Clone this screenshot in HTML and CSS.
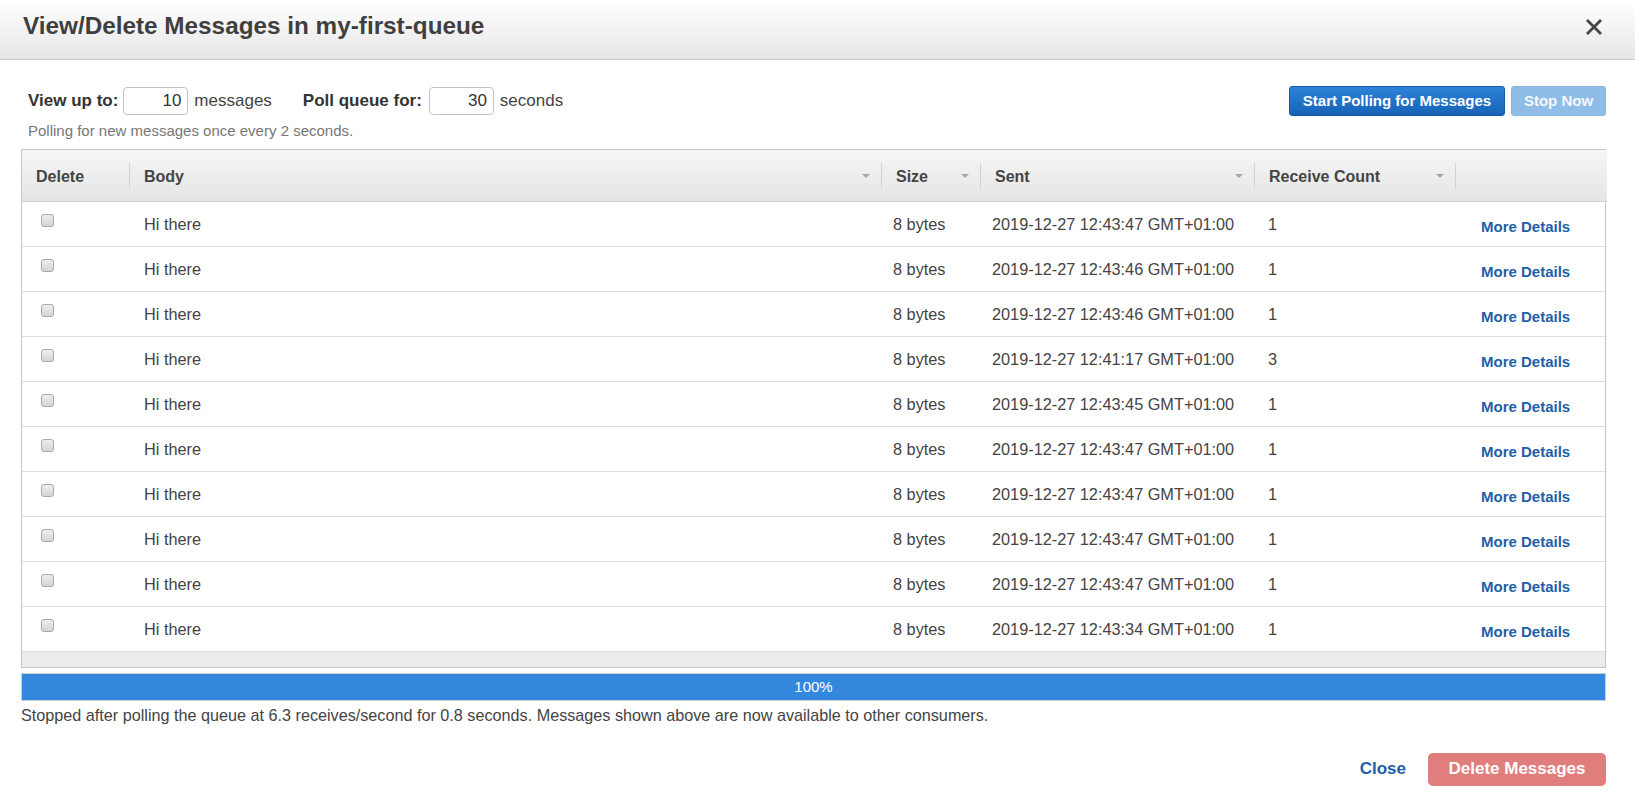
FILE: index.html
```html
<!DOCTYPE html>
<html>
<head>
<meta charset="utf-8">
<link rel="stylesheet" href="styles.css">
</head>
<body>
<div class="modal">
  <div class="header">
    <h1 class="title">View/Delete Messages in my-first-queue</h1>
    <button class="close-x" aria-label="Close">
      <svg width="18" height="18" viewBox="0 0 18 18"><path d="M2 2 L16 16 M16 2 L2 16" stroke="#444" stroke-width="2.8" stroke-linecap="butt" fill="none"/></svg>
    </button>
  </div>
  <div class="content">
    <div class="toolbar">
      <div class="opts">
        <span class="lbl">View up to:</span>
        <input class="num" type="text" value="10">
        <span class="unit">messages</span>
        <span class="lbl lbl2">Poll queue for:</span>
        <input class="num" type="text" value="30">
        <span class="unit">seconds</span>
      </div>
      <div class="actions">
        <button class="btn btn-primary">Start Polling for Messages</button>
        <button class="btn btn-disabled">Stop Now</button>
      </div>
    </div>
    <div class="help">Polling for new messages once every 2 seconds.</div>

    <div class="grid-wrap">
      <table class="grid">
        <colgroup>
          <col style="width:108px"><col style="width:752px"><col style="width:99px"><col style="width:274px"><col style="width:201px"><col style="width:151px">
        </colgroup>
        <thead>
          <tr>
            <th><div class="th"><span>Delete</span></div></th>
            <th><div class="th"><span>Body</span><i class="arrow"></i></div></th>
            <th><div class="th"><span>Size</span><i class="arrow"></i></div></th>
            <th><div class="th"><span>Sent</span><i class="arrow"></i></div></th>
            <th><div class="th"><span>Receive Count</span><i class="arrow"></i></div></th>
            <th><div class="th th-last"></div></th>
          </tr>
        </thead>
        <tbody>
          <tr><td><span class="cb"></span></td><td>Hi there</td><td>8 bytes</td><td>2019-12-27 12:43:47 GMT+01:00</td><td>1</td><td><a class="more">More Details</a></td></tr>
          <tr><td><span class="cb"></span></td><td>Hi there</td><td>8 bytes</td><td>2019-12-27 12:43:46 GMT+01:00</td><td>1</td><td><a class="more">More Details</a></td></tr>
          <tr><td><span class="cb"></span></td><td>Hi there</td><td>8 bytes</td><td>2019-12-27 12:43:46 GMT+01:00</td><td>1</td><td><a class="more">More Details</a></td></tr>
          <tr><td><span class="cb"></span></td><td>Hi there</td><td>8 bytes</td><td>2019-12-27 12:41:17 GMT+01:00</td><td>3</td><td><a class="more">More Details</a></td></tr>
          <tr><td><span class="cb"></span></td><td>Hi there</td><td>8 bytes</td><td>2019-12-27 12:43:45 GMT+01:00</td><td>1</td><td><a class="more">More Details</a></td></tr>
          <tr><td><span class="cb"></span></td><td>Hi there</td><td>8 bytes</td><td>2019-12-27 12:43:47 GMT+01:00</td><td>1</td><td><a class="more">More Details</a></td></tr>
          <tr><td><span class="cb"></span></td><td>Hi there</td><td>8 bytes</td><td>2019-12-27 12:43:47 GMT+01:00</td><td>1</td><td><a class="more">More Details</a></td></tr>
          <tr><td><span class="cb"></span></td><td>Hi there</td><td>8 bytes</td><td>2019-12-27 12:43:47 GMT+01:00</td><td>1</td><td><a class="more">More Details</a></td></tr>
          <tr><td><span class="cb"></span></td><td>Hi there</td><td>8 bytes</td><td>2019-12-27 12:43:47 GMT+01:00</td><td>1</td><td><a class="more">More Details</a></td></tr>
          <tr><td><span class="cb"></span></td><td>Hi there</td><td>8 bytes</td><td>2019-12-27 12:43:34 GMT+01:00</td><td>1</td><td><a class="more">More Details</a></td></tr>
        </tbody>
      </table>
      <div class="grid-foot"></div>
    </div>

    <div class="progress"><div class="bar" style="width:100%">100%</div></div>
    <div class="status">Stopped after polling the queue at 6.3 receives/second for 0.8 seconds. Messages shown above are now available to other consumers.</div>

    <div class="footer">
      <a class="link-close">Close</a>
      <button class="btn-danger">Delete Messages</button>
    </div>
  </div>
</div>
</body>
</html>
```
FILE: styles.css
```css
* { box-sizing: border-box; }
html, body { margin: 0; padding: 0; background: #fff; }
body { font-family: "Liberation Sans", Arial, sans-serif; color: #444; width: 1635px; height: 809px; overflow: hidden; }

.header {
  height: 60px;
  background: linear-gradient(to bottom, #ffffff 0%, #f3f3f3 50%, #e6e6e6 100%);
  border-bottom: 1px solid #c9c9c9;
  display: flex;
  justify-content: space-between;
  align-items: flex-start;
  padding: 12px 32px 0 23px;
}
.title { margin: 0; font-size: 24.3px; line-height: 28px; font-weight: bold; color: #3f3f3f; }
.close-x { border: 0; background: none; padding: 0; margin-top: 6px; width: 18px; height: 18px; display: block; cursor: pointer; }
.close-x svg { display: block; }

.content { padding: 0 29px 0 21px; }

.toolbar { display: flex; justify-content: space-between; align-items: center; margin-top: 25px; height: 31px; }
.opts { display: flex; align-items: center; padding-left: 7px; font-size: 17px; }
.lbl { font-weight: bold; color: #333; }
.lbl2 { margin-left: 31px; }
.unit { color: #444; margin-left: 6px; }
.num {
  width: 65px; height: 28px; margin-left: 5px;
  border: 1px solid #c3c3c3; border-radius: 4px;
  font-family: "Liberation Sans", Arial, sans-serif; font-size: 17px; color: #333;
  text-align: right; padding: 0 6px 0 0; background: #fff; outline: none;
}
.lbl2 + .num { margin-left: 7px; }

.actions { display: flex; gap: 6px; }
.btn {
  height: 30px; border-radius: 3px; color: #fff; font-family: "Liberation Sans", Arial, sans-serif;
  font-size: 15px; font-weight: bold; padding: 0; cursor: pointer;
}
.btn-primary { width: 216px; background: linear-gradient(to bottom, #2d82d8, #1663b6); border: 1px solid #155aa6; }
.btn-disabled { width: 95px; background: #8fbde7; border: 1px solid #87b6e1; color: #f4f8fc; }

.help { margin-top: 6px; padding-left: 7px; font-size: 15px; line-height: 18px; color: #777; }

.grid-wrap { margin-top: 9px; border: 1px solid #c4c4c4; }
.grid { width: 100%; border-collapse: collapse; table-layout: fixed; }
.grid thead th {
  height: 51px; padding: 2px 0 0; text-align: left; font-size: 16px; font-weight: bold; color: #444;
  background: linear-gradient(to bottom, #f6f6f6, #e5e5e5);
  border-bottom: 1px solid #cfcfcf;
}
.th { display: flex; align-items: center; height: 26px; padding: 0 11px 0 14px; border-right: 1px solid #d2d2d2; }
.th span { flex: 1; padding-top: 2px; }
.th-last { border-right: 0; }
.arrow { width: 0; height: 0; border-left: 4px solid transparent; border-right: 4px solid transparent; border-top: 4px solid #a8a8a8; }
.grid tbody td {
  height: 45px; padding: 13px 0 0 13px; vertical-align: top;
  font-size: 16.3px; line-height: 18px; color: #444;
  border-bottom: 1px solid #dedede; white-space: nowrap;
}
.grid tbody td:first-child { padding-left: 19px; }
.grid tbody td:nth-child(2) { padding-left: 14px; }
.grid tbody td:nth-child(3) { padding-left: 11px; }
.grid tbody td:nth-child(4) { padding-left: 11px; }
.grid tbody td:last-child { padding-left: 25px; padding-top: 15px; }
.cb {
  display: block; width: 13px; height: 13px; border: 1px solid #aaa; border-radius: 3px;
  background: linear-gradient(to bottom, #eee, #d4d4d4); margin-top: -1px;
}
.more { font-size: 15px; font-weight: bold; color: #1f5fa8; text-decoration: none; cursor: pointer; }
.grid-foot { height: 15px; background: #ececec; }

.progress { margin-top: 5px; border: 1px solid #d0d0d0; padding: 0; }
.bar { height: 26px; background: #3388dd; color: #fff; font-size: 15px; line-height: 26px; text-align: center; }

.status { margin-top: 5px; font-size: 16.2px; line-height: 18px; color: #444; }

.footer { display: flex; justify-content: flex-end; align-items: center; gap: 22px; margin-top: 29px; }
.link-close { font-size: 17px; font-weight: bold; color: #1f5ea8; cursor: pointer; }
.btn-danger {
  width: 178px; height: 33px; border: 0; border-radius: 5px; background: #e07d7d; color: #fff;
  font-family: "Liberation Sans", Arial, sans-serif; font-size: 17px; font-weight: bold; padding: 0; cursor: pointer;
}
```
